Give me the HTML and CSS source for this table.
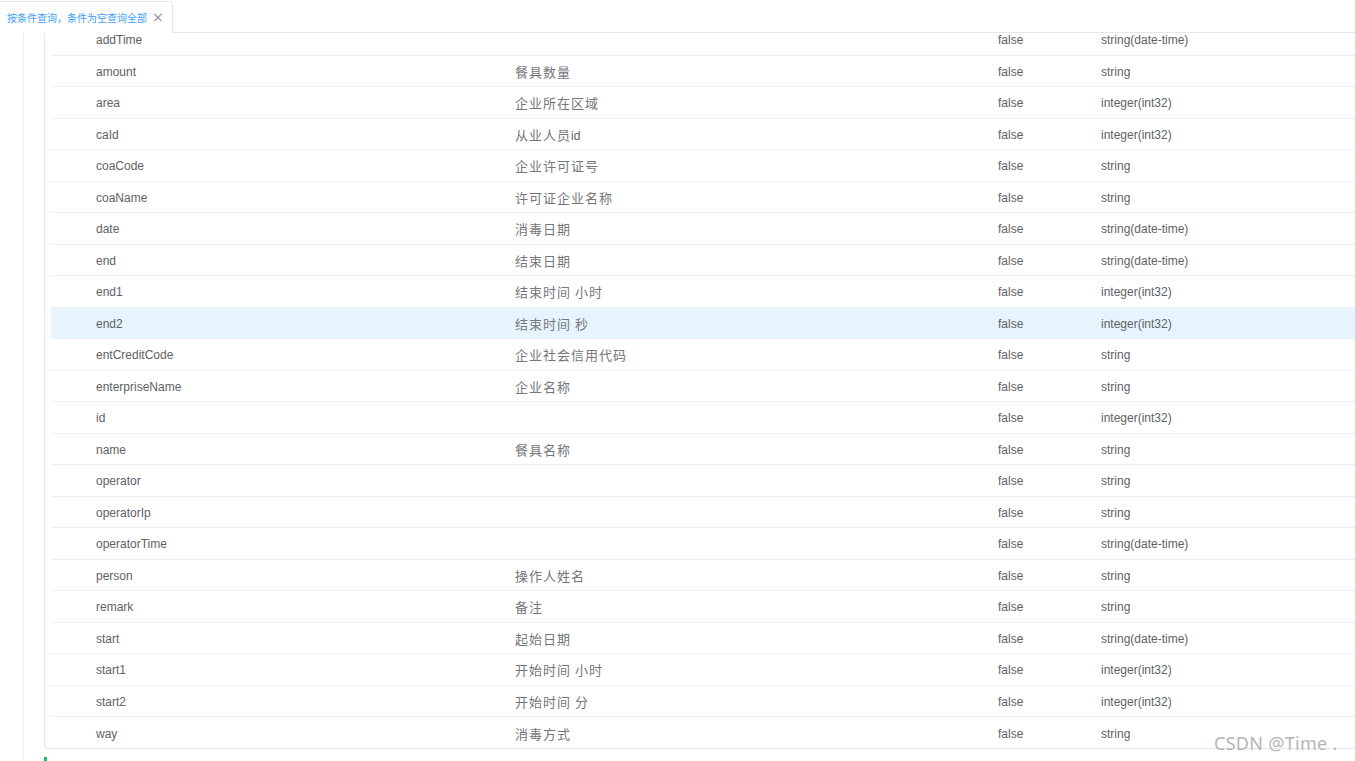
FILE: index.html
```html
<!DOCTYPE html>
<html lang="zh">
<head>
<meta charset="utf-8">
<title>接口参数</title>
<link rel="stylesheet" href="styles.css">
</head>
<body>
<div class="tabs">
  <div class="tab"><span class="tab-title">按条件查询，条件为空查询全部</span><span class="tab-close">×</span></div>
  <div class="tab-fill"></div>
</div>
<div class="main">
  <div class="rail"></div>
  <div class="content">
    <div class="card">
      <div class="clip">
        <div class="table">
          <div class="row"><span class="c-name">addTime</span><span class="c-desc"></span><span class="c-req">false</span><span class="c-type">string(date-time)</span></div>
          <div class="row"><span class="c-name">amount</span><span class="c-desc">餐具数量</span><span class="c-req">false</span><span class="c-type">string</span></div>
          <div class="row"><span class="c-name">area</span><span class="c-desc">企业所在区域</span><span class="c-req">false</span><span class="c-type">integer(int32)</span></div>
          <div class="row"><span class="c-name">caId</span><span class="c-desc">从业人员<span class="latin">id</span></span><span class="c-req">false</span><span class="c-type">integer(int32)</span></div>
          <div class="row"><span class="c-name">coaCode</span><span class="c-desc">企业许可证号</span><span class="c-req">false</span><span class="c-type">string</span></div>
          <div class="row"><span class="c-name">coaName</span><span class="c-desc">许可证企业名称</span><span class="c-req">false</span><span class="c-type">string</span></div>
          <div class="row"><span class="c-name">date</span><span class="c-desc">消毒日期</span><span class="c-req">false</span><span class="c-type">string(date-time)</span></div>
          <div class="row"><span class="c-name">end</span><span class="c-desc">结束日期</span><span class="c-req">false</span><span class="c-type">string(date-time)</span></div>
          <div class="row"><span class="c-name">end1</span><span class="c-desc">结束时间 小时</span><span class="c-req">false</span><span class="c-type">integer(int32)</span></div>
          <div class="row row-hover"><span class="c-name">end2</span><span class="c-desc">结束时间 秒</span><span class="c-req">false</span><span class="c-type">integer(int32)</span></div>
          <div class="row"><span class="c-name">entCreditCode</span><span class="c-desc">企业社会信用代码</span><span class="c-req">false</span><span class="c-type">string</span></div>
          <div class="row"><span class="c-name">enterpriseName</span><span class="c-desc">企业名称</span><span class="c-req">false</span><span class="c-type">string</span></div>
          <div class="row"><span class="c-name">id</span><span class="c-desc"></span><span class="c-req">false</span><span class="c-type">integer(int32)</span></div>
          <div class="row"><span class="c-name">name</span><span class="c-desc">餐具名称</span><span class="c-req">false</span><span class="c-type">string</span></div>
          <div class="row"><span class="c-name">operator</span><span class="c-desc"></span><span class="c-req">false</span><span class="c-type">string</span></div>
          <div class="row"><span class="c-name">operatorIp</span><span class="c-desc"></span><span class="c-req">false</span><span class="c-type">string</span></div>
          <div class="row"><span class="c-name">operatorTime</span><span class="c-desc"></span><span class="c-req">false</span><span class="c-type">string(date-time)</span></div>
          <div class="row"><span class="c-name">person</span><span class="c-desc">操作人姓名</span><span class="c-req">false</span><span class="c-type">string</span></div>
          <div class="row"><span class="c-name">remark</span><span class="c-desc">备注</span><span class="c-req">false</span><span class="c-type">string</span></div>
          <div class="row"><span class="c-name">start</span><span class="c-desc">起始日期</span><span class="c-req">false</span><span class="c-type">string(date-time)</span></div>
          <div class="row"><span class="c-name">start1</span><span class="c-desc">开始时间 小时</span><span class="c-req">false</span><span class="c-type">integer(int32)</span></div>
          <div class="row"><span class="c-name">start2</span><span class="c-desc">开始时间 分</span><span class="c-req">false</span><span class="c-type">integer(int32)</span></div>
          <div class="row row-last"><span class="c-name">way</span><span class="c-desc">消毒方式</span><span class="c-req">false</span><span class="c-type">string</span></div>
        </div>
      </div>
    </div>
    <div class="green-mark"></div>
  </div>
</div>
<div class="watermark">CSDN @Time .</div>
</body>
</html>
```

FILE: styles.css
```css
html, body {
  margin: 0;
  padding: 0;
  background: #ffffff;
  height: 761px;
  overflow: hidden;
}
body {
  font-family: "Liberation Sans", Arial, "Noto Sans CJK SC", sans-serif;
  color: #606266;
  position: relative;
}
.tabs {
  display: flex;
  height: 33px;
  box-sizing: border-box;
}
.tab {
  width: 173px;
  box-sizing: border-box;
  border-top: 1px solid #e4e7ed;
  border-right: 1px solid #e4e7ed;
  border-top-right-radius: 4px;
  margin-top: 1px;
  display: flex;
  align-items: center;
  padding-left: 7px;
  gap: 5px;
}
.tab-title {
  font-family: "Noto Sans CJK SC", sans-serif;
  font-size: 10px;
  color: #409eff;
  white-space: nowrap;
}
.tab-close {
  font-family: "DejaVu Sans", sans-serif;
  font-size: 14px;
  color: #909399;
  line-height: 1;
  margin-top: -1px;
}
.tab-fill {
  flex: 1;
  border-bottom: 1px solid #e4e7ed;
}
.main {
  display: flex;
  height: 728px;
}
.rail {
  width: 23px;
  border-right: 1px solid #ebeef5;
}
.content {
  flex: 1;
  padding-left: 20px;
  display: flex;
  flex-direction: column;
}
.card {
  border-left: 1px solid #e4e7ed;
  border-bottom: 1px solid #e4e7ed;
  border-bottom-left-radius: 4px;
  padding-left: 6px;
}
.clip {
  overflow: hidden;
  height: 715px;
}
.table {
  margin-top: -9px;
}
.row {
  display: flex;
  align-items: center;
  height: 31.5px;
  box-sizing: border-box;
  border-bottom: 1px solid #ebeef5;
  font-size: 12px;
  padding-top: 2px;
}
.row-last {
  border-bottom: none;
}
.row-hover {
  background: #e6f5fd;
}
.c-name {
  width: 464px;
  padding-left: 45px;
  box-sizing: border-box;
  flex: none;
}
.c-desc {
  width: 483px;
  flex: none;
  font-family: "Noto Sans CJK SC", sans-serif;
  font-size: 13px;
  letter-spacing: 1px;
  color: #74767a;
  margin-top: -1px;
}
.c-desc .latin {
  font-family: "Liberation Sans", Arial, sans-serif;
  font-size: 12px;
  letter-spacing: 0;
  color: #606266;
}
.c-req {
  width: 103px;
  flex: none;
}
.c-type {
  flex: 1;
}
.green-mark {
  width: 3px;
  height: 5px;
  background: #19be6b;
  margin-top: 8px;
}
.watermark {
  position: absolute;
  left: 1214px;
  top: 731px;
  font-family: "Noto Sans", sans-serif;
  font-size: 18px;
  color: #b5b5b5;
  letter-spacing: 0.3px;
  text-shadow: 0 0 1px #ffffff;
}
```
